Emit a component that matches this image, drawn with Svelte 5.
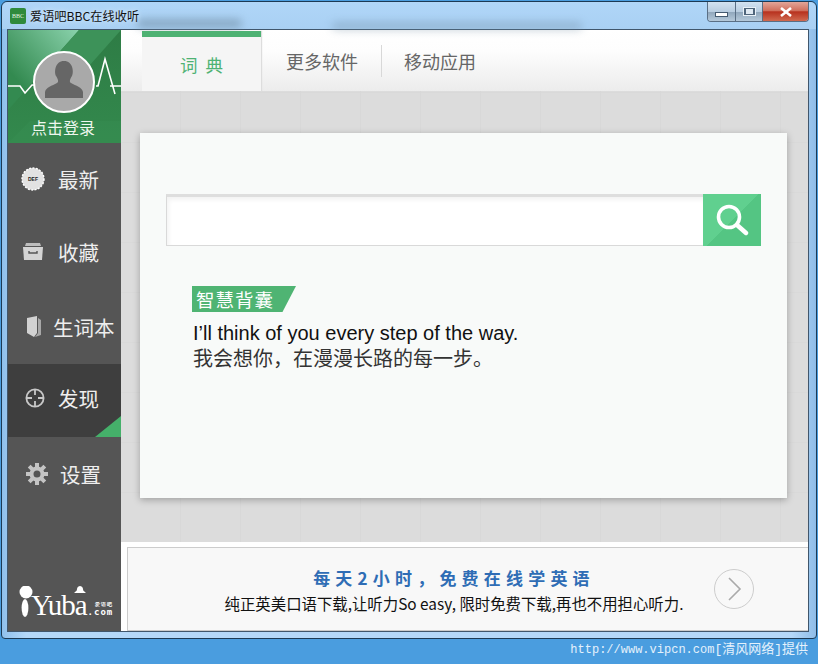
<script>
	const tabs = [
		{ label: '词 典', active: true },
		{ label: '更多软件', active: false },
		{ label: '移动应用', active: false }
	];
	const navItems = [
		{ id: 'new', label: '最新', h: 71 },
		{ id: 'fav', label: '收藏', h: 75 },
		{ id: 'book', label: '生词本', h: 75 },
		{ id: 'find', label: '发现', h: 73, active: true },
		{ id: 'set', label: '设置', h: 74 }
	];
</script>

<div class="desktop">
	<div class="window">
		<header class="titlebar">
			<span class="blob one"></span>
			<span class="blob two"></span>
			<span class="appicon">BBC</span>
			<span class="apptitle">爱语吧BBC在线收听</span>
			<div class="controls">
				<span class="ctl min"><i></i></span>
				<span class="ctl max"><i></i></span>
				<span class="ctl close">
					<svg viewBox="0 0 14 10" width="14" height="10"><path d="M2 1L12 9M12 1L2 9" stroke="#fff" stroke-width="2.6" /></svg>
				</span>
			</div>
		</header>

		<div class="client">
			<aside class="sidebar">
				<div class="profile">
					<svg class="profile-bg" viewBox="0 0 113 113" width="113" height="113">
						<defs>
							<linearGradient id="streak" x1="0" y1="1" x2="1" y2="0">
								<stop offset="25%" stop-color="#338a50" />
								<stop offset="100%" stop-color="#8ad2ac" />
							</linearGradient>
							<linearGradient id="base" x1="0" y1="0" x2="0" y2="1">
								<stop offset="0%" stop-color="#2e7c45" />
								<stop offset="100%" stop-color="#33894d" />
							</linearGradient>
						</defs>
						<rect width="113" height="113" fill="url(#base)" />
						<polygon points="0,0 71,0 0,80" fill="url(#streak)" />
						<polygon points="71,0 113,0 58,62 30,46" fill="#3d9259" />
						<polygon points="0,113 22,91 113,91 113,113" fill="#3c9157" opacity="0.3" />
						<path d="M0 56H12L17 63L24 55H30M88 56H90L97 29L107 64M102 56H113" fill="none" stroke="#fff" stroke-width="1.6" />
						<circle cx="56" cy="52" r="30" fill="#a9a9a9" stroke="#fff" stroke-width="2" />
						<path d="M37 68V62C38 57 44 56 49 53C51 52 50 49 48 46C46 42 47 31 56 31C65 31 66 42 64 46C62 49 61 52 63 53C68 56 74 57 75 62V68Z" fill="#666" />
					</svg>
					<span class="login">点击登录</span>
				</div>
				{#each navItems as item}
					<div class="navitem" class:active={item.active} style="height: {item.h}px">
						<span class="navicon {item.id}">
							{#if item.id === 'new'}
								<svg viewBox="0 0 24 24" width="24" height="24">
									<circle cx="12" cy="12" r="11" fill="#e2e2e2" stroke="#fff" stroke-width="1.4" stroke-dasharray="2 1.4" />
									<text x="12" y="14" text-anchor="middle" class="newtext">DEF</text>
								</svg>
							{:else if item.id === 'fav'}
								<svg viewBox="0 0 22 18" width="22" height="18">
									<path d="M4 0H18L19 3H3Z" fill="#bdbdbd" />
									<path d="M1 4H21L20 17H2Z" fill="#d4d4d4" />
									<path d="M7 8V10H15V8" fill="none" stroke="#555" stroke-width="1.4" />
								</svg>
							{:else if item.id === 'book'}
								<svg viewBox="0 0 16 22" width="16" height="22">
									<path d="M1 2L11 0V17L8 21L1 17Z" fill="#d2d2d2" />
									<path d="M12 2L15 4V19L9 21L12 17Z" fill="#a8a8a8" />
								</svg>
							{:else if item.id === 'find'}
								<svg viewBox="0 0 20 20" width="20" height="20">
									<circle cx="10" cy="10" r="8.6" fill="none" stroke="#c8c8c8" stroke-width="1.8" />
									<path d="M10 1V7M10 13V19M1 10H7M13 10H19" stroke="#c8c8c8" stroke-width="1.8" />
								</svg>
							{:else}
								<svg viewBox="0 0 22 22" width="22" height="22">
									<circle cx="11" cy="11" r="5.5" fill="none" stroke="#c4c4c4" stroke-width="4" />
									<path d="M11 0V5M11 17V22M0 11H5M17 11H22M3.2 3.2L6.7 6.7M15.3 15.3L18.8 18.8M18.8 3.2L15.3 6.7M6.7 15.3L3.2 18.8" stroke="#c4c4c4" stroke-width="4" />
								</svg>
							{/if}
						</span>
						<span class="navlabel">{item.label}</span>
					</div>
				{/each}
				<div class="logo">
					<svg viewBox="0 0 16 32" width="16" height="32">
						<circle cx="8" cy="6" r="6.5" fill="#fff" />
						<ellipse cx="7" cy="22" rx="3.4" ry="9" fill="#fff" />
					</svg>
					<span class="yuba">Yuba<svg class="hat" viewBox="0 0 12 7" width="12" height="7"><path d="M0 7C2 5 3 5 3 3C3 1 5 0 6 0C7 0 9 1 9 3C9 5 10 5 12 7Z" fill="#fff" /></svg></span>
					<span class="dotcom"><small>爱语吧</small>.com</span>
				</div>
			</aside>

			<main class="main">
				<nav class="tabs">
					{#each tabs as tab}
						<span class="tab" class:active={tab.active}>{tab.label}</span>
					{/each}
				</nav>
				<section class="canvas">
					<div class="card">
						<div class="search">
							<input type="text" aria-label="搜索" />
							<button aria-label="搜索">
								<svg viewBox="0 0 34 34" width="34" height="34">
									<circle cx="14" cy="14" r="10.5" fill="none" stroke="#fff" stroke-width="3.6" />
									<path d="M22 22L31 30" stroke="#fff" stroke-width="4.4" stroke-linecap="round" />
								</svg>
							</button>
						</div>
						<div class="tip">
							<span class="tag">智慧背囊</span>
							<p class="en">I’ll think of you every step of the way.</p>
							<p class="zh">我会想你，在漫漫长路的每一步。</p>
						</div>
					</div>
				</section>
				<footer class="promo">
					<div class="promo-inner">
						<div class="promo-text">
							<div class="headline">每天2小时，免费在线学英语</div>
							<div class="subline">纯正英美口语下载,让听力So easy, 限时免费下载,再也不用担心听力.</div>
						</div>
						<svg class="next" viewBox="0 0 40 40" width="40" height="40">
							<circle cx="20" cy="20" r="19.5" fill="none" stroke="#ccc" />
							<path d="M15 9L26 20L15 31" fill="none" stroke="#aaa" stroke-width="1.6" />
						</svg>
					</div>
				</footer>
			</main>
		</div>
	</div>
	<div class="credit">http://www.vipcn.com<span>[清风网络]提供</span></div>
</div>

<style>
	:global(body) {
		margin: 0;
	}
	.desktop {
		width: 818px;
		height: 664px;
		box-sizing: border-box;
		padding-top: 1px;
		background: #4a9ddf;
		overflow: hidden;
		font-family: 'Noto Sans CJK SC', 'Liberation Sans', sans-serif;
	}
	.window {
		width: 816px;
		height: 638px;
		margin-left: 1px;
		box-sizing: border-box;
		display: flex;
		flex-direction: column;
		padding: 0 7px 6px 5px;
		background: linear-gradient(90deg, #8fc0ec, #b4d8f9 3%, #b4d8f9 97%, #8fbde8);
		border: 1px solid #1c3a55;
		border-radius: 6px 6px 4px 4px;
	}
	.titlebar {
		position: relative;
		flex: none;
		height: 27px;
		display: flex;
		align-items: center;
		gap: 4px;
		background: linear-gradient(180deg, #b0d6f8, #a9d0f3);
		margin: 0 -7px 0 -5px;
		padding: 0 7px 0 8px;
		border-radius: 6px 6px 0 0;
	}
	.blob {
		position: absolute;
		border-radius: 8px;
		filter: blur(4px);
		background: #6f8ba1;
		opacity: 0.6;
	}
	.blob.one {
		left: 135px;
		top: 17px;
		width: 105px;
		height: 9px;
	}
	.blob.two {
		left: 330px;
		top: 20px;
		width: 250px;
		height: 8px;
		opacity: 0.4;
	}
	.appicon {
		position: relative;
		width: 16px;
		height: 16px;
		border-radius: 2px;
		background: #2f8a3c;
		color: #e6f5e6;
		font: 6px/16px 'Liberation Serif', serif;
		text-align: center;
	}
	.apptitle {
		position: relative;
		font-size: 12.2px;
		color: #111;
		text-shadow: 0 0 5px #e6f2ff;
	}
	.controls {
		position: relative;
		align-self: flex-start;
		margin-left: auto;
		display: flex;
		height: 20px;
		width: 102px;
		box-sizing: border-box;
		border: 1px solid #5a6f85;
		border-top: 0;
		border-radius: 0 0 4px 4px;
		overflow: hidden;
	}
	.ctl {
		display: flex;
		align-items: center;
		justify-content: center;
		height: 100%;
		background: linear-gradient(180deg, #d2e2f1 0%, #b9cde0 50%, #8fa6bb 52%, #b5c9da 100%);
		border-right: 1px solid #5a6f85;
		box-sizing: border-box;
	}
	.ctl.min {
		width: 28px;
	}
	.ctl.max {
		width: 27px;
	}
	.ctl.close {
		flex: 1;
		border-right: 0;
		background: linear-gradient(180deg, #e2a699 0%, #d0705d 45%, #b8321f 52%, #d06a50 100%);
	}
	.min i {
		display: block;
		width: 11px;
		height: 3px;
		margin-top: 5px;
		background: #fff;
		border: 1px solid #445a70;
	}
	.max i {
		display: block;
		width: 7px;
		height: 5px;
		background: #dfe9f2;
		border: 2px solid #4f657b;
		border-width: 1px 2px;
		box-shadow: 0 0 0 1px #e8f0f7;
	}
	.client {
		flex: 1;
		display: flex;
		min-height: 0;
		border: 1px solid #40566c;
		background: #fff;
	}
	.sidebar {
		flex: none;
		width: 113px;
		display: flex;
		flex-direction: column;
		background: #555;
	}
	.profile {
		position: relative;
		height: 113px;
		flex: none;
		display: flex;
		flex-direction: column;
		justify-content: flex-end;
		align-items: center;
	}
	.profile-bg {
		position: absolute;
		left: 0;
		top: 0;
	}
	.login {
		position: relative;
		color: #eef6ee;
		font-size: 16px;
		line-height: 20px;
		margin: 0 3px 6px 0;
	}
	.navitem {
		position: relative;
		flex: none;
		display: flex;
		align-items: center;
		box-sizing: border-box;
		color: #eee;
		font-size: 20.5px;
	}
	.navicon {
		display: flex;
		justify-content: center;
		box-sizing: border-box;
		width: 50px;
	}
	.navicon.book {
		width: 45px;
		padding-left: 6px;
	}
	.navicon.find {
		padding-left: 4px;
	}
	.navicon.set {
		width: 52px;
		padding-left: 5px;
	}
	.newtext {
		font: bold 5px 'Liberation Sans', sans-serif;
		fill: #222;
	}
	.navitem.active {
		background: #3e3e3e;
		padding-bottom: 5px;
	}
	.navitem.active::after {
		content: '';
		position: absolute;
		right: 0;
		bottom: 0;
		width: 26px;
		height: 21px;
		background: #45b06a;
		clip-path: polygon(100% 0, 100% 100%, 0 100%);
	}
	.logo {
		margin-top: auto;
		height: 48px;
		display: flex;
		align-items: flex-end;
		padding: 0 0 13px 10px;
		box-sizing: border-box;
		color: #fff;
	}
	.yuba {
		position: relative;
		font: 29px/26px 'Liberation Serif', serif;
		letter-spacing: -1px;
		margin-left: -3px;
	}
	.hat {
		position: absolute;
		right: 1px;
		top: -6px;
	}
	.dotcom {
		display: flex;
		flex-direction: column;
		align-items: flex-end;
		font: bold 9px/9px 'DejaVu Sans Mono', monospace;
		letter-spacing: 1px;
		margin-left: 1px;
		margin-bottom: 1px;
	}
	.dotcom small {
		font-size: 5px;
		line-height: 7px;
	}
	.main {
		flex: 1;
		min-width: 0;
		display: flex;
		flex-direction: column;
	}
	.tabs {
		flex: none;
		height: 61px;
		box-sizing: border-box;
		display: flex;
		padding: 1px 0 0 21px;
		background: linear-gradient(180deg, #fff 0%, #fdfdfd 35%, #ececec 100%);
	}
	.tab {
		width: 120px;
		display: flex;
		align-items: center;
		justify-content: center;
		font-size: 18px;
		color: #666;
		position: relative;
	}
	.tab:nth-child(2)::after {
		content: '';
		position: absolute;
		right: 0;
		top: 14px;
		height: 32px;
		width: 1px;
		background: #d8d8d8;
	}
	.tab:nth-child(3) {
		margin-left: -2px;
	}
	.tab.active {
		width: 119px;
		margin-right: 1px;
		background: #f5f5f5;
		border-top: 6px solid #4eb273;
		box-sizing: border-box;
		color: #4eb273;
		font-size: 17.5px;
		word-spacing: 4px;
		box-shadow: 1px 0 1px #ddd;
	}
	.canvas {
		flex: 1;
		min-height: 0;
		box-sizing: border-box;
		padding: 42px 21px 44px 19px;
		background-color: #dcdcdc;
		background-image: repeating-linear-gradient(90deg, transparent 0 59px, #d8d8d8 59px 60px), repeating-linear-gradient(0deg, transparent 0 49px, #d9d9d9 49px 50px);
	}
	.card {
		height: 100%;
		box-sizing: border-box;
		background: #f8faf9;
		box-shadow: 0 2px 7px rgba(0, 0, 0, 0.28);
		padding: 61px 26px 0;
	}
	.search {
		display: flex;
		height: 52px;
	}
	.search input {
		flex: 1;
		min-width: 0;
		box-sizing: border-box;
		border: 1px solid #d9d9d9;
		border-top: 3px solid #dedede;
		border-right: 0;
		outline: 0;
		background: #fff;
		box-shadow: inset 2px 3px 4px rgba(0, 0, 0, 0.05);
	}
	.search button {
		flex: none;
		width: 58px;
		padding: 0;
		display: flex;
		align-items: center;
		justify-content: center;
		border: 0;
		background: linear-gradient(135deg, #60d08f 0%, #60d08f 50%, #54c583 50%, #54c583 100%);
	}
	.tip {
		padding: 40px 0 0 26px;
	}
	.tag {
		display: block;
		width: 104px;
		height: 26px;
		box-sizing: border-box;
		padding-left: 4px;
		line-height: 26px;
		font-size: 18.5px;
		letter-spacing: 1px;
		color: #fff;
		background: #4fb473;
		clip-path: polygon(0 0, 100% 0, 87% 100%, 0 100%);
	}
	.en,
	.zh {
		margin: 0 0 0 1px;
		color: #111;
		font-size: 20px;
		line-height: 25px;
	}
	.en {
		margin-top: 9px;
		font-family: 'Liberation Sans', sans-serif;
	}
	.zh {
		color: #333;
		margin-top: -1px;
	}
	.promo {
		flex: none;
		height: 89px;
		box-sizing: border-box;
		padding: 5px 0 0 6px;
		background: #fff;
	}
	.promo-inner {
		height: 100%;
		box-sizing: border-box;
		border: 1px solid #ccc;
		border-width: 1px 0 1px 1px;
		background: #f8f8f8;
		display: flex;
		align-items: center;
		padding-left: 66px;
		padding-right: 54px;
	}
	.promo-text {
		flex: 1;
		text-align: center;
	}
	.headline {
		color: #2f6db5;
		font-weight: 700;
		font-size: 17px;
		letter-spacing: 5.2px;
		line-height: 27px;
		margin-top: -2px;
	}
	.subline {
		color: #111;
		font-size: 15.4px;
		line-height: 24px;
		margin-bottom: -2px;
	}
	.next {
		flex: none;
	}
	.credit {
		height: 24px;
		line-height: 22px;
		text-align: right;
		padding-right: 10px;
		color: #e4f1fc;
		font-size: 12px;
		font-family: 'Liberation Mono', 'Noto Sans CJK SC', monospace;
		white-space: nowrap;
	}
	.credit span {
		font-size: 13px;
	}
</style>
